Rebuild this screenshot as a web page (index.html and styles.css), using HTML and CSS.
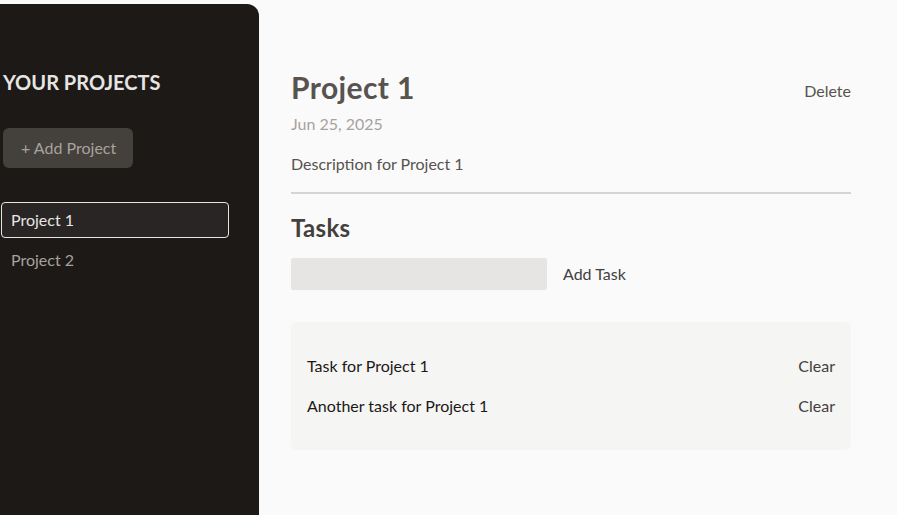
FILE: index.html
```html
<!DOCTYPE html>
<html lang="en">
<head>
<meta charset="utf-8">
<title>Projects</title>
<link rel="stylesheet" href="styles.css">
</head>
<body>
<div class="app">
  <aside class="sidebar">
    <h2 class="sidebar-title">YOUR PROJECTS</h2>
    <button class="add-project">+ Add Project</button>
    <ul class="project-list">
      <li><button class="project-item selected">Project 1</button></li>
      <li><button class="project-item">Project 2</button></li>
    </ul>
  </aside>
  <main class="main">
    <header class="project-header">
      <div class="title-row">
        <h1 class="project-title">Project 1</h1>
        <button class="link-btn">Delete</button>
      </div>
      <p class="project-date">Jun 25, 2025</p>
      <p class="project-desc">Description for Project 1</p>
    </header>
    <section class="tasks">
      <h2 class="tasks-title">Tasks</h2>
      <div class="new-task">
        <input class="task-input" type="text">
        <button class="link-btn dark">Add Task</button>
      </div>
      <ul class="task-list">
        <li class="task"><span>Task for Project 1</span><button class="link-btn dark">Clear</button></li>
        <li class="task"><span>Another task for Project 1</span><button class="link-btn dark">Clear</button></li>
      </ul>
    </section>
  </main>
</div>
</body>
</html>
```
FILE: styles.css
```css
* { box-sizing: border-box; }
html, body { margin: 0; padding: 0; }
body {
  background: #fafafa;
  font-family: Lato, "Open Sans", sans-serif;
  font-size: 16px;
  line-height: 24px;
  color: #292524;
  height: 515px;
  overflow: hidden;
}
button {
  font: inherit;
  border: none;
  background: none;
  padding: 0;
  cursor: pointer;
}
ul { list-style: none; margin: 0; padding: 0; }
h1, h2, p { margin: 0; }

.app {
  display: flex;
  padding-top: 4px;
  height: 100%;
}
.sidebar {
  width: 259px;
  flex: none;
  background: #1c1917;
  border-top-right-radius: 12px;
  padding: 64px 30px 0 1px;
}
.sidebar-title {
  margin-left: 2px;
  font-size: 20px;
  line-height: 28px;
  font-weight: 700;
  color: #e7e5e4;
  margin-bottom: 32px;
}
.add-project {
  margin-left: 2px;
  height: 40px;
  padding: 0 17px 0 18px;
  border-radius: 6px;
  background: #44403c;
  color: #a8a29e;
}
.project-list { margin-top: 34px; }
.project-list li + li { margin-top: 4px; }
.project-item {
  display: block;
  width: 100%;
  text-align: left;
  height: 36px;
  padding: 0 9px;
  border: 1px solid transparent;
  border-radius: 4px;
  color: #a8a29e;
}
.project-item.selected {
  background: #292524;
  border-color: #e7e5e4;
  color: #e7e5e4;
}

.main {
  margin-left: 32px;
  width: 560px;
  padding-top: 65px;
}
.project-header {
  padding-bottom: 16px;
  border-bottom: 2px solid #d6d3d1;
}
.title-row {
  display: flex;
  justify-content: space-between;
  align-items: center;
}
.project-title {
  font-size: 30px;
  line-height: 36px;
  font-weight: 700;
  letter-spacing: 0.4px;
  color: #57534e;
  margin-bottom: 7px;
}
.link-btn { color: #57534e; }
.link-btn.dark { color: #44403c; }
.project-date { color: #a8a29e; margin-bottom: 16px; }
.project-desc { color: #57534e; }

.tasks { padding-top: 18px; }
.tasks-title {
  font-size: 24px;
  line-height: 32px;
  font-weight: 700;
  letter-spacing: 0.3px;
  color: #44403c;
  margin-bottom: 14px;
}
.new-task {
  display: flex;
  align-items: center;
  gap: 16px;
}
.task-input {
  width: 256px;
  height: 32px;
  border: none;
  border-radius: 2px;
  background: #e7e5e4;
  padding: 0 8px;
  font: inherit;
}
.task-list {
  margin-top: 32px;
  padding: 16px;
  background: #f5f5f4;
  border-radius: 6px;
}
.task {
  display: flex;
  justify-content: space-between;
  margin: 16px 0;
  color: #1c1917;
}
```
